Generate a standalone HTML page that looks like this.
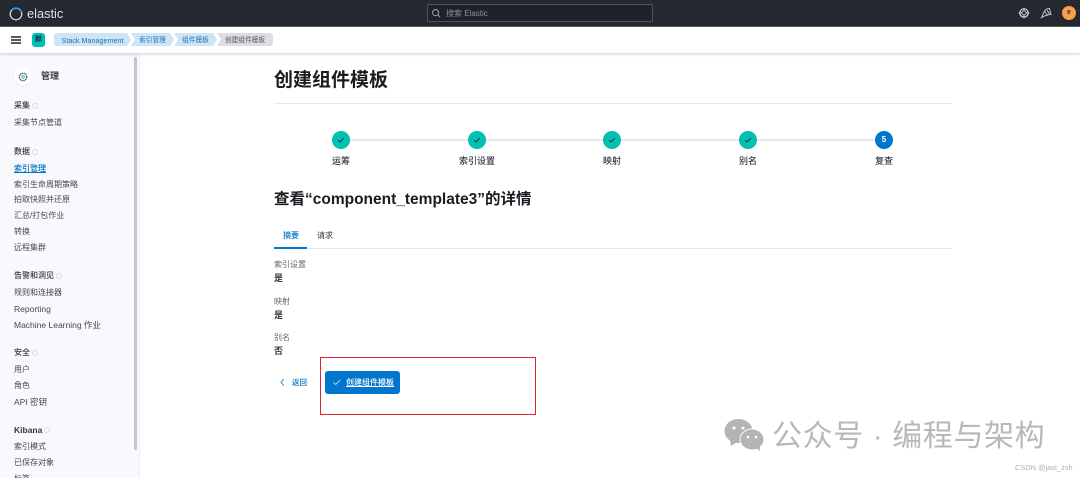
<!DOCTYPE html>
<html lang="zh"><head><meta charset="utf-8"><title>创建组件模板</title>
<style>
html,body{margin:0;padding:0;background:#fff}
#p{position:relative;width:1080px;height:478px;overflow:hidden;background:#fff;font-family:"Liberation Sans","Noto Sans CJK SC",sans-serif;color:#454852}
.t{position:absolute;white-space:nowrap;line-height:14px;height:14px;font-size:8px;margin-top:1px;filter:blur(.35px)}
.s{color:#343741;font-size:8px;font-weight:500}
.c{transform:translateX(-50%)}
.a{position:absolute}
.dot{position:absolute;width:6px;height:6px;border:1px solid #d8dbe0;border-radius:50%;box-sizing:border-box;margin-top:1px}
.cr{position:absolute;top:33px;height:13px;line-height:15px;font-size:6.7px;color:#1a75b5;background:#cfe4f5;text-align:center;white-space:nowrap;clip-path:polygon(0 0,calc(100% - 4px) 0,100% 50%,calc(100% - 4px) 100%,0 100%,4px 50%);filter:blur(.25px)}
.st{position:absolute;top:131px;width:18px;height:18px;border-radius:50%;background:#00bfb3}
</style></head><body><div id="p">

<!-- top header -->
<div class="a" style="left:0;top:0;width:1080px;height:26px;background:#25282f;border-bottom:1px solid #55585e"></div>
<svg class="a" style="left:8px;top:6px" width="16" height="16" viewBox="0 0 16 16"><circle cx="8" cy="8" r="5.8" fill="none" stroke="#d5d8dc" stroke-width="1.3"/><path d="M4 3.7A5.8 5.8 0 0 1 13.6 6.4" fill="none" stroke="#1ba9f5" stroke-width="1.4"/></svg>
<div class="t" style="left:27px;top:6px;font-size:12.800px;color:#dfe1e4">elastic</div>
<div class="a" style="left:427px;top:4px;width:226px;height:18px;box-sizing:border-box;background:#1f2228;border:1px solid #50535a;border-radius:2px"></div>
<svg class="a" style="left:431px;top:8px" width="10" height="10" viewBox="0 0 10 10"><circle cx="4.6" cy="4.6" r="3.1" fill="none" stroke="#a5a8ad" stroke-width=".9"/><path d="M7 7l2 2" stroke="#a5a8ad" stroke-width=".9"/></svg>
<div class="t" style="left:446px;top:6px;color:#8e9196;font-size:8px">搜索 Elastic</div>
<svg class="a" style="left:1018px;top:7px" width="12" height="12" viewBox="0 0 12 12"><circle cx="6" cy="6" r="4.2" fill="none" stroke="#d5d7da" stroke-width="1.2"/><circle cx="6" cy="6" r="2" fill="none" stroke="#d5d7da" stroke-width=".8"/><path d="M6 .8v3M6 8.2v3M.8 6h3M8.2 6h3" stroke="#d5d7da" stroke-width="1"/></svg>
<svg class="a" style="left:1040px;top:7px" width="12" height="12" viewBox="0 0 12 12"><path d="M1.5 10.5C3 8 3.5 5 5.5 3 7 1.5 9 1 9.500 1.500L11 7.500C9 7.500 6 8 1.500 10.500zM5 5l3 3.500M7 3l2.500 4" fill="none" stroke="#cfd1d4" stroke-width=".9"/></svg>
<div class="a" style="left:1062px;top:6px;width:14px;height:14px;border-radius:50%;background:#f5a04c"></div>
<div class="t" style="left:1062px;top:5px;width:14px;text-align:center;font-size:7px;color:#3a2d1a;font-weight:700">e</div>

<!-- breadcrumb bar -->
<div class="a" style="left:0;top:27px;width:1080px;height:26px;background:#fff;box-shadow:0 1px 3px rgba(60,70,90,.28);z-index:3"></div>
<div style="position:absolute;left:0;top:0;width:1080px;height:54px;z-index:4">
<div class="a" style="left:11px;top:36px;width:10px;height:1.5px;background:#55585f"></div>
<div class="a" style="left:11px;top:39px;width:10px;height:1.5px;background:#55585f"></div>
<div class="a" style="left:11px;top:42px;width:10px;height:1.5px;background:#55585f"></div>
<div class="a" style="left:32px;top:33px;width:13px;height:14px;border-radius:3px;background:#00bfb3;color:#123;font-size:7px;line-height:14px;text-align:center;font-weight:700">默</div>
<div class="cr" style="left:54px;width:77px;font-size:7.200px;clip-path:polygon(0 0,calc(100% - 4px) 0,100% 50%,calc(100% - 4px) 100%,0 100%);border-radius:3px 0 0 3px">Stack Management</div>
<div class="cr" style="left:131px;width:43px">索引管理</div>
<div class="cr" style="left:174px;width:43px">组件模板</div>
<div class="cr" style="left:217px;width:56px;background:#dcdde0;color:#55585f;clip-path:polygon(0 0,100% 0,100% 100%,0 100%,4px 50%);border-radius:0 3px 3px 0">创建组件模板</div>
</div>

<!-- sidebar -->
<div class="a" style="left:0;top:53px;width:139px;height:425px;background:#f8f9fc;border-right:1px solid #eef0f4"></div>
<div class="a" style="left:134px;top:57px;width:3px;height:393px;background:#c3c5cb;border-radius:2px"></div>
<div class="a" style="left:14px;top:67px;width:18px;height:18px;border-radius:50%;background:#fff;box-shadow:0 1px 2px rgba(60,70,90,.08)"></div>
<svg class="a" style="left:17px;top:71px" width="12" height="12" viewBox="0 0 12 12"><circle cx="6" cy="6" r="3.700" fill="none" stroke="#5a5e66" stroke-width="1.400" stroke-dasharray="1.400 .6"/><circle cx="6" cy="6" r="1.300" fill="none" stroke="#00bfb3" stroke-width=".8"/></svg>
<div class="t" style="left:41px;top:68px;font-size:9px;font-weight:700;color:#343741">管理</div>

<div class="t s" style="left:14px;top:98px">采集</div><div class="dot" style="left:32px;top:102px"></div>
<div class="t" style="left:14px;top:115px">采集节点管道</div>
<div class="t s" style="left:14px;top:144px">数据</div><div class="dot" style="left:32px;top:148px"></div>
<div class="t" style="left:14px;top:161px;color:#0071c2;font-weight:500;text-decoration:underline">索引管理</div>
<div class="t" style="left:14px;top:177px">索引生命周期策略</div>
<div class="t" style="left:14px;top:192px">拍取快照并还原</div>
<div class="t" style="left:14px;top:208px">汇总/打包作业</div>
<div class="t" style="left:14px;top:224px">转换</div>
<div class="t" style="left:14px;top:240px">远程集群</div>
<div class="t s" style="left:14px;top:268px">告警和洞见</div><div class="dot" style="left:56px;top:272px"></div>
<div class="t" style="left:14px;top:285px">规则和连接器</div>
<div class="t" style="left:14px;top:301px;font-size:8.500px">Reporting</div>
<div class="t" style="left:14px;top:317px;font-size:8.500px">Machine Learning 作业</div>
<div class="t s" style="left:14px;top:345px">安全</div><div class="dot" style="left:32px;top:349px"></div>
<div class="t" style="left:14px;top:362px">用户</div>
<div class="t" style="left:14px;top:378px">角色</div>
<div class="t" style="left:14px;top:394px;font-size:8.500px">API 密钥</div>
<div class="t s" style="left:14px;top:422px;font-size:8.500px;font-weight:700">Kibana</div><div class="dot" style="left:44px;top:426px"></div>
<div class="t" style="left:14px;top:439px">索引模式</div>
<div class="t" style="left:14px;top:455px">已保存对象</div>
<div class="t" style="left:14px;top:471px">标签</div>

<!-- title -->
<div class="t" style="left:274px;top:66px;height:28px;line-height:28px;font-size:19px;font-weight:700;color:#1a1c21">创建组件模板</div>
<div class="a" style="left:274px;top:103px;width:678px;height:1px;background:#e4e8f1"></div>

<!-- steps -->
<div class="a" style="left:341px;top:139px;width:543px;height:2px;background:#e3e7f0"></div>
<div class="st" style="left:332px"></div><div class="st" style="left:468px"></div><div class="st" style="left:603px"></div><div class="st" style="left:739px"></div>
<div class="st" style="left:875px;background:#0077cc;color:#fff;font-size:8px;font-weight:700;text-align:center;line-height:18px">5</div>
<svg class="a" style="left:332px;top:131px" width="18" height="18" viewBox="0 0 18 18"><path d="M6.200 9.100l1.900 1.800 3.700-3.700" fill="none" stroke="#1f2b33" stroke-width=".9"/></svg>
<svg class="a" style="left:468px;top:131px" width="18" height="18" viewBox="0 0 18 18"><path d="M6.200 9.100l1.900 1.800 3.700-3.700" fill="none" stroke="#1f2b33" stroke-width=".9"/></svg>
<svg class="a" style="left:603px;top:131px" width="18" height="18" viewBox="0 0 18 18"><path d="M6.200 9.100l1.900 1.800 3.700-3.700" fill="none" stroke="#1f2b33" stroke-width=".9"/></svg>
<svg class="a" style="left:739px;top:131px" width="18" height="18" viewBox="0 0 18 18"><path d="M6.200 9.100l1.900 1.800 3.700-3.700" fill="none" stroke="#1f2b33" stroke-width=".9"/></svg>
<div class="t c" style="left:341px;top:153px;font-size:9px;font-weight:500;color:#343741">运筹</div>
<div class="t c" style="left:477px;top:153px;font-size:9px;font-weight:500;color:#343741">索引设置</div>
<div class="t c" style="left:612px;top:153px;font-size:9px;font-weight:500;color:#343741">映射</div>
<div class="t c" style="left:748px;top:153px;font-size:9px;font-weight:500;color:#343741">别名</div>
<div class="t c" style="left:884px;top:153px;font-size:9px;font-weight:500;color:#343741">复查</div>

<!-- heading -->
<div class="t" style="left:274px;top:189px;height:20px;line-height:20px;font-size:15.500px;font-weight:700;color:#1a1c21">查看“component_template3”的详情</div>

<!-- tabs -->
<div class="t" style="left:283px;top:228px;color:#0071c2;font-weight:500">摘要</div>
<div class="t" style="left:317px;top:228px;color:#343741">请求</div>
<div class="a" style="left:274px;top:248px;width:678px;height:1px;background:#e4e8f1"></div>
<div class="a" style="left:274px;top:247px;width:33px;height:2px;background:#0077cc"></div>

<!-- summary -->
<div class="t" style="left:274px;top:257px;color:#62656d">索引设置</div>
<div class="t" style="left:274px;top:270px;font-size:9px;font-weight:700;color:#343741">是</div>
<div class="t" style="left:274px;top:294px;color:#62656d">映射</div>
<div class="t" style="left:274px;top:307px;font-size:9px;font-weight:700;color:#343741">是</div>
<div class="t" style="left:274px;top:330px;color:#62656d">别名</div>
<div class="t" style="left:274px;top:343px;font-size:9px;font-weight:700;color:#343741">否</div>

<!-- actions -->
<svg class="a" style="left:279px;top:378px" width="7" height="9" viewBox="0 0 7 9"><path d="M4.800 1L2 4.300 4.800 7.600" fill="none" stroke="#1a7fc9" stroke-width=".9"/></svg>
<div class="t" style="left:292px;top:375px;color:#0071c2;font-size:7.500px;font-weight:500">返回</div>
<div class="a" style="left:325px;top:371px;width:75px;height:23px;background:#0077cc;border-radius:3px"></div>
<svg class="a" style="left:332px;top:378px" width="10" height="9" viewBox="0 0 10 9"><path d="M1.500 4.500l2.200 2 4.500-4.500" fill="none" stroke="#b9dbf3" stroke-width=".9"/></svg>
<div class="t" style="left:346px;top:375px;color:#fff;font-weight:500;text-decoration:underline">创建组件模板</div>
<div class="a" style="left:320px;top:357px;width:216px;height:58px;box-sizing:border-box;border:1px solid #e3222f"></div>

<!-- watermark -->
<svg class="a" style="left:722px;top:417px" width="44" height="36" viewBox="0 0 44 36"><ellipse cx="16.500" cy="14" rx="14" ry="12" fill="#b4b4b4"/><path d="M8 23l1 6 6-4z" fill="#b4b4b4"/><ellipse cx="30" cy="22.500" rx="12" ry="10.500" fill="#b4b4b4" stroke="#fff" stroke-width="1"/><path d="M34 31l4 3-.5-6z" fill="#b4b4b4"/><circle cx="12" cy="11" r="1.500" fill="#fff"/><circle cx="21" cy="11" r="1.500" fill="#fff"/><circle cx="26" cy="20" r="1.300" fill="#fff"/><circle cx="34" cy="20" r="1.300" fill="#fff"/></svg>
<div class="t" style="left:772px;top:418px;height:36px;line-height:36px;font-size:30px;letter-spacing:.6px;color:#b8b8b8">公众号 · 编程与架构</div>
<div class="t" style="left:1015px;top:460px;font-size:7.400px;color:#b0b0b0">CSDN @jast_zsh</div>

</div></body></html>
